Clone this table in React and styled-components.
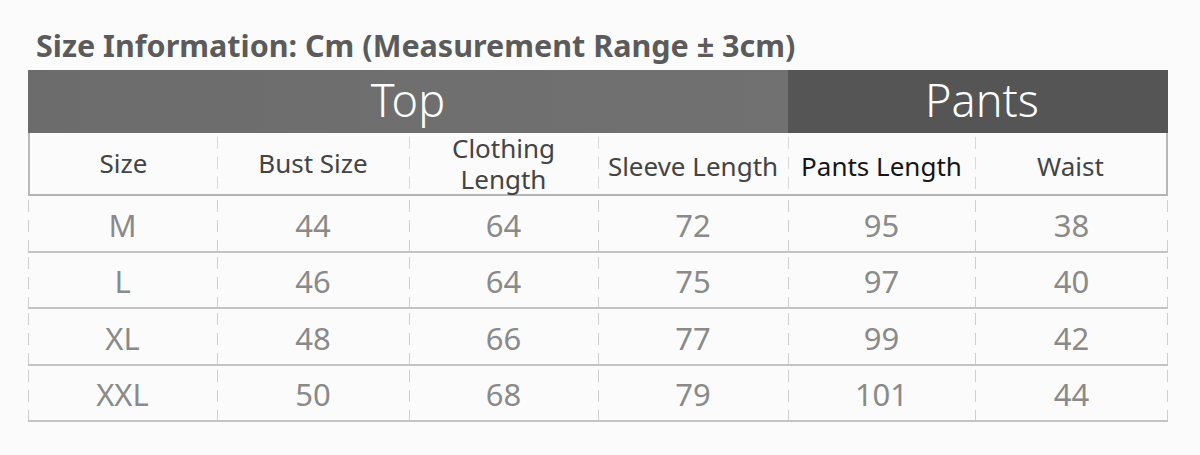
import React from 'react';
import styled, { createGlobalStyle } from 'styled-components';

const GlobalStyle = createGlobalStyle`
  html, body {
    margin: 0;
    padding: 0;
    background: #fbfbfb;
  }
  body {
    font-family: "Noto Sans", "Open Sans", sans-serif;
  }
`;

const Page = styled.div`
  width: 1200px;
  height: 455px;
  padding: 24px 0 0 28px;
  box-sizing: border-box;
  background: #fbfbfb;
`;

const Title = styled.h1`
  margin: 0 0 0 8px;
  height: 46px;
  font-size: 30.5px;
  line-height: 42px;
  font-weight: 700;
  color: #5b5b5b;
  white-space: nowrap;
`;

const COLS = '189px 192px 189px 190px 187px 193px';

const Table = styled.div`
  width: 1140px;
  display: grid;
  grid-template-columns: ${COLS};
`;

const Band = styled.div`
  grid-column: span ${p => p.span};
  height: 63px;
  display: flex;
  align-items: center;
  justify-content: center;
  background: ${p => p.bg};
  color: #fff;
  font-size: 45px;
  font-weight: 300;
  padding-left: ${p => p.shift || 0}px;
  padding-bottom: 4px;
  box-sizing: border-box;
`;

const dash = color => `linear-gradient(to bottom, ${color} 62%, transparent 62%)`;

const Cell = styled.div`
  height: ${p => p.h}px;
  display: flex;
  align-items: center;
  justify-content: center;
  text-align: center;
  box-sizing: border-box;
  border-bottom: 2px solid ${p => (p.head ? '#b4b4b4' : '#c4c4c4')};
  background-image: ${p => dash(p.head ? '#d8d8d8' : '#cfcfcf')};
  background-size: 1px 20px;
  background-repeat: repeat-y;
  background-position: 0 4px;
  ${p => p.first && `background-image: none; border-left: 2px solid #b8b8b8;`}
  ${p => p.first && !p.head && `border-left: none; background-image: ${dash('#cfcfcf')};`}
  ${p => p.last && p.head && `border-right: 2px solid #b8b8b8;`}
  ${p =>
    p.last &&
    !p.head &&
    `background-image: ${dash('#cfcfcf')}, ${dash('#cfcfcf')};
     background-position: 0 4px, right 4px;`}
`;

const HeadText = styled.span`
  display: flex;
  flex-direction: column;
  align-items: center;
  font-size: 26px;
  line-height: 31px;
  color: ${p => (p.dark ? '#151515' : '#444')};
  white-space: nowrap;
  padding-top: ${p => p.pt || 0}px;
`;

const Value = styled.span`
  font-size: 31px;
  color: #8a8a8a;
  padding-top: 2px;
`;

const headers = [
  { label: ['Size'], pt: 0 },
  { label: ['Bust Size'], pt: 0 },
  { label: ['Clothing', 'Length'], pt: 0 },
  { label: ['Sleeve Length'], pt: 6 },
  { label: ['Pants Length'], dark: true, pt: 6 },
  { label: ['Waist'], pt: 6 },
];

const rows = [
  ['M', 44, 64, 72, 95, 38],
  ['L', 46, 64, 75, 97, 40],
  ['XL', 48, 66, 77, 99, 42],
  ['XXL', 50, 68, 79, 101, 44],
];

const rowHeights = [57, 56, 57, 56];

export default function App() {
  return (
    <Page>
      <GlobalStyle />
      <Title>Size Information: Cm (Measurement Range ± 3cm)</Title>
      <Table>
        <Band span={4} bg="linear-gradient(to right, #6c6c6c, #717171)">Top</Band>
        <Band span={2} bg="#555555" shift={8}>Pants</Band>
        {headers.map((h, i) => (
          <Cell key={i} head h={63} first={i === 0} last={i === 5}>
            <HeadText dark={h.dark} pt={h.pt}>
              {h.label.map(line => (
                <span key={line}>{line}</span>
              ))}
            </HeadText>
          </Cell>
        ))}
        {rows.map((r, ri) =>
          r.map((v, ci) => (
            <Cell key={`${ri}-${ci}`} h={rowHeights[ri]} first={ci === 0} last={ci === 5}>
              <Value>{v}</Value>
            </Cell>
          ))
        )}
      </Table>
    </Page>
  );
}
